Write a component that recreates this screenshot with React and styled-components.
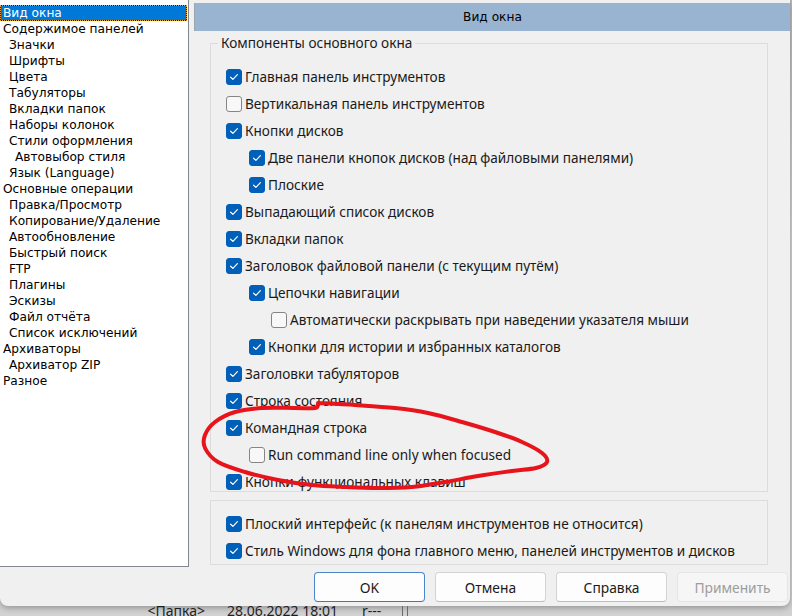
import React from "react";
import styled, { createGlobalStyle } from "styled-components";

const GlobalStyle = createGlobalStyle`
  html, body {
    margin: 0;
    padding: 0;
  }
  body {
    background: #cdcdcd;
    font-family: "Noto Sans", "Open Sans", sans-serif;
  }
`;

const Page = styled.div`
  position: relative;
  width: 792px;
  height: 616px;
  overflow: hidden;
  background: linear-gradient(#b9b9b9, #d2d2d2 40%);
`;

const Dialog = styled.div`
  width: 790px;
  height: 606px;
  background: #f0f0f0;
  border-radius: 0 0 8px 8px;
  box-shadow: 0 2px 6px rgba(0, 0, 0, 0.3);
  display: flex;
  flex-direction: column;
`;

const Main = styled.div`
  display: flex;
  height: 567px;
`;

const Tree = styled.div`
  width: 189px;
  height: 567px;
  box-sizing: border-box;
  background: #fff;
  border-right: 1px solid #828790;
  border-bottom: 1px solid #828790;
  padding-top: 5px;
`;

const TreeItem = styled.div`
  height: 16px;
  line-height: 17px;
  box-sizing: border-box;
  margin-right: 1px;
  padding-left: ${(p) => 3 + p.$level * 6}px;
  font-family: "DejaVu Sans", "Liberation Sans", sans-serif;
  font-size: 12.2px;
  color: ${(p) => (p.$selected ? "#fff" : "#000")};
  background: ${(p) => (p.$selected ? "#0078d7" : "transparent")};
  white-space: nowrap;
  ${(p) =>
    p.$selected &&
    `
    border: 1px solid #1a1a1a;
    outline: 1px dotted #f0a030;
    outline-offset: -1px;
    line-height: 15px;
    padding-left: 2px;
  `}
`;

const RightPane = styled.div`
  flex: 1;
  display: flex;
  flex-direction: column;
  padding: 3px 0 0 5px;
`;

const Header = styled.div`
  height: 28px;
  line-height: 28px;
  background: #99b4d1;
  border-left: 1px solid #9aa5b2;
  text-align: center;
  font-family: "DejaVu Sans", "Liberation Sans", sans-serif;
  font-size: 12.2px;
  color: #000;
`;

const GroupBox = styled.div`
  position: relative;
  box-sizing: border-box;
  height: ${(p) => p.$height}px;
  margin: ${(p) => p.$top}px 22px 0 16px;
  padding: ${(p) => p.$padTop}px 0 0 15px;
  border: 1px solid #dcdcdc;
`;

const Legend = styled.span`
  position: absolute;
  top: -9px;
  left: 7px;
  padding: 0 3px;
  background: #f0f0f0;
  font-size: 13.6px;
  line-height: 16px;
  color: #1a1a1a;
`;

const OptionRow = styled.div`
  height: 27px;
  display: flex;
  align-items: center;
  padding-left: ${(p) => [0, 23, 45][p.$level]}px;
`;

const Box = styled.span`
  width: 16px;
  height: 16px;
  box-sizing: border-box;
  flex: none;
  border-radius: 3px;
  border: 1px solid ${(p) => (p.$checked ? "#005fb8" : "#858585")};
  background: ${(p) => (p.$checked ? "#005fb8" : "#f8f8f8")};
  display: flex;
  align-items: center;
  justify-content: center;
`;

const Label = styled.span`
  margin-left: 3px;
  font-size: 13.6px;
  line-height: 16px;
  color: #1a1a1a;
  white-space: nowrap;
`;

const ButtonBar = styled.div`
  display: flex;
  justify-content: flex-end;
  gap: 10px;
  padding: 5px 2px 0 0;
`;

const DialogButton = styled.button`
  width: 111px;
  height: 30px;
  box-sizing: border-box;
  border-radius: 4px;
  border: 1px solid ${(p) => (p.$default ? "#4a86c8" : "#d3d3d3")};
  border-bottom-color: ${(p) => (p.$default ? "#3b78bd" : "#bcbcbc")};
  background: #fdfdfd;
  font-family: "Noto Sans", sans-serif;
  font-size: 13.8px;
  color: #1a1a1a;
  padding: 0;
  &:disabled {
    background: #f6f6f6;
    border-color: #e5e5e5;
    color: #9d9d9d;
  }
`;

const FileRow = styled.div`
  height: 10px;
  display: flex;
  overflow: hidden;
  font-size: 14px;
  line-height: 10px;
  color: #1e1e1e;
`;

const FileCell = styled.span`
  width: ${(p) => p.$width}px;
  padding-left: ${(p) => p.$pad || 0}px;
  text-align: ${(p) => p.$align || "left"};
  flex: none;
  white-space: nowrap;
`;

const ColumnLine = styled.span`
  width: 1px;
  margin-right: 4px;
  background: #6b6b6b;
  flex: none;
`;

const Scribble = styled.svg`
  position: absolute;
  left: 0;
  top: 0;
  pointer-events: none;
`;

const treeItems = [
  [0, "Вид окна"],
  [0, "Содержимое панелей"],
  [1, "Значки"],
  [1, "Шрифты"],
  [1, "Цвета"],
  [1, "Табуляторы"],
  [1, "Вкладки папок"],
  [1, "Наборы колонок"],
  [1, "Стили оформления"],
  [2, "Автовыбор стиля"],
  [1, "Язык (Language)"],
  [0, "Основные операции"],
  [1, "Правка/Просмотр"],
  [1, "Копирование/Удаление"],
  [1, "Автообновление"],
  [1, "Быстрый поиск"],
  [1, "FTP"],
  [1, "Плагины"],
  [1, "Эскизы"],
  [1, "Файл отчёта"],
  [1, "Список исключений"],
  [0, "Архиваторы"],
  [1, "Архиватор ZIP"],
  [0, "Разное"],
];

const mainOptions = [
  [0, true, "Главная панель инструментов"],
  [0, false, "Вертикальная панель инструментов"],
  [0, true, "Кнопки дисков"],
  [1, true, "Две панели кнопок дисков (над файловыми панелями)"],
  [1, true, "Плоские"],
  [0, true, "Выпадающий список дисков"],
  [0, true, "Вкладки папок"],
  [0, true, "Заголовок файловой панели (с текущим путём)"],
  [1, true, "Цепочки навигации"],
  [2, false, "Автоматически раскрывать при наведении указателя мыши"],
  [1, true, "Кнопки для истории и избранных каталогов"],
  [0, true, "Заголовки табуляторов"],
  [0, true, "Строка состояния"],
  [0, true, "Командная строка"],
  [1, false, "Run command line only when focused"],
  [0, true, "Кнопки функциональных клавиш"],
];

const styleOptions = [
  [0, true, "Плоский интерфейс (к панелям инструментов не относится)"],
  [0, true, "Стиль Windows для фона главного меню, панелей инструментов и дисков"],
];

// hand-drawn red loop around the command line options
const loop = [
  [318, 403], [355, 405], [395, 408], [428, 413], [462, 422], [495, 432],
  [522, 442], [542, 453], [547, 462], [536, 468], [512, 471], [478, 476],
  [445, 482], [412, 487], [378, 488], [345, 487], [312, 485], [278, 480],
  [245, 472], [218, 462], [205, 448], [205, 435], [215, 422], [235, 412],
  [262, 408], [295, 408], [315, 408], [318, 404],
];

function smoothPath(pts) {
  let d = `M${pts[0][0]} ${pts[0][1]}`;
  for (let i = 0; i < pts.length - 1; i++) {
    const p0 = pts[i - 1] || pts[i];
    const p1 = pts[i];
    const p2 = pts[i + 1];
    const p3 = pts[i + 2] || p2;
    const c1 = [p1[0] + (p2[0] - p0[0]) / 6, p1[1] + (p2[1] - p0[1]) / 6];
    const c2 = [p2[0] - (p3[0] - p1[0]) / 6, p2[1] - (p3[1] - p1[1]) / 6];
    d += ` C${c1[0]} ${c1[1]} ${c2[0]} ${c2[1]} ${p2[0]} ${p2[1]}`;
  }
  return d;
}

function Check({ checked }) {
  return (
    <Box $checked={checked}>
      {checked && (
        <svg width="14" height="14" viewBox="0 0 14 14">
          <path
            d="M3.6 7.2 L5.9 9.4 L10.4 4.6"
            fill="none"
            stroke="#fff"
            strokeWidth="1.2"
            strokeLinecap="round"
            strokeLinejoin="round"
          />
        </svg>
      )}
    </Box>
  );
}

function Option({ level, checked, label }) {
  return (
    <OptionRow $level={level}>
      <Check checked={checked} />
      <Label>{label}</Label>
    </OptionRow>
  );
}

export default function App() {
  return (
    <Page>
      <GlobalStyle />
      <Dialog>
        <Main>
          <Tree>
            {treeItems.map(([level, text], i) => (
              <TreeItem key={text} $level={level} $selected={i === 0}>
                {text}
              </TreeItem>
            ))}
          </Tree>
          <RightPane>
            <Header>Вид окна</Header>
            <GroupBox $top={12} $height={449} $padTop={19}>
              <Legend>Компоненты основного окна</Legend>
              {mainOptions.map(([level, checked, label]) => (
                <Option key={label} level={level} checked={checked} label={label} />
              ))}
            </GroupBox>
            <GroupBox $top={8} $height={65} $padTop={9}>
              {styleOptions.map(([level, checked, label]) => (
                <Option key={label} level={level} checked={checked} label={label} />
              ))}
            </GroupBox>
          </RightPane>
        </Main>
        <ButtonBar>
          <DialogButton $default>OK</DialogButton>
          <DialogButton>Отмена</DialogButton>
          <DialogButton>Справка</DialogButton>
          <DialogButton disabled>Применить</DialogButton>
        </ButtonBar>
      </Dialog>
      <FileRow>
        <FileCell $width={205} $align="right">&lt;Папка&gt;</FileCell>
        <FileCell $width={135} $pad={22}>28.06.2022 18:01</FileCell>
        <FileCell $width={40}>r---</FileCell>
        <ColumnLine />
        <ColumnLine />
      </FileRow>
      <Scribble width="792" height="616" viewBox="0 0 792 616">
        <path
          d={smoothPath(loop)}
          fill="none"
          stroke="#e8141c"
          strokeWidth="4"
          strokeLinecap="round"
          strokeLinejoin="round"
        />
      </Scribble>
    </Page>
  );
}
